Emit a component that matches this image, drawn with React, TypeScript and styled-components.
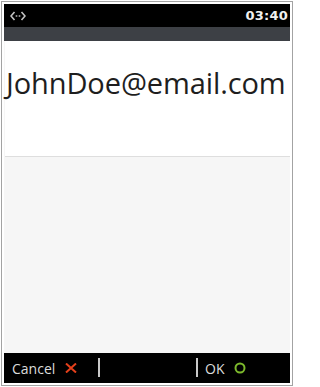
import React from 'react';
import styled, {createGlobalStyle} from 'styled-components';

const GlobalStyle = createGlobalStyle`
    html, body {
        margin: 0;
        padding: 0;
        background: #ffffff;
    }
`

const Page = styled.div`
    width: 294px;
    height: 387px;
    box-sizing: border-box;
    padding: 1px;
    background: #ffffff;
`

const Frame = styled.div`
    width: 100%;
    height: 100%;
    box-sizing: border-box;
    border: 1px solid #a3a3a3;
    padding: 2px;
`

const Screen = styled.div`
    height: 100%;
    display: flex;
    flex-direction: column;
    background: #f6f6f6;
    font-family: "Open Sans", "Noto Sans", sans-serif;
`

const StatusBar = styled.div`
    height: 23px;
    background: #000000;
    display: flex;
    align-items: center;
    justify-content: space-between;
    padding: 0 2px 0 6px;
`

const Clock = styled.span`
    font-family: "DejaVu Sans", sans-serif;
    font-weight: bold;
    font-size: 13px;
    color: #f0f0f0;
    letter-spacing: 0.2px;
`

const TitleBar = styled.div`
    height: 14px;
    background: #3d4045;
`

const Field = styled.div`
    height: 116px;
    background: #ffffff;
    display: flex;
    align-items: flex-start;
    padding-top: 22px;
    box-sizing: border-box;
    border-bottom: 1px solid #dedede;
    margin: 0 0 0 1px;
`

const Value = styled.div`
    font-size: 29px;
    color: #1e1e1e;
    padding-left: 1px;
    white-space: nowrap;
    letter-spacing: -0.1px;
`

const Body = styled.div`
    flex: 1;
`

const Footer = styled.div`
    height: 30px;
    background: #000000;
    display: grid;
    grid-template-columns: 96px 1fr 95px;
    align-items: center;
`

const SoftKey = styled.div<{side: 'left' | 'right'}>`
    position: relative;
    height: 100%;
    display: flex;
    align-items: center;
    gap: 10px;
    padding-left: ${props => props.side === 'left' ? '8px' : '10px'};
    font-size: 14px;
    color: #dcdcdc;
    &::after {
        content: '';
        position: absolute;
        top: 5px;
        ${props => props.side === 'left' ? 'right: 0;' : 'left: 1px;'}
        width: 2px;
        height: 19px;
        background: #c8c8c8;
    }
`

const DataIcon = () => (
    <svg width="16" height="10" viewBox="0 0 16 10">
        <path d="M4.5 1 L1 5 L4.5 9" fill="none" stroke="#c4c4c4" strokeWidth="1.6" />
        <path d="M11.5 1 L15 5 L11.5 9" fill="none" stroke="#c4c4c4" strokeWidth="1.6" />
        <circle cx="6.5" cy="5" r="1" fill="#9a9a9a" />
        <circle cx="9.5" cy="5" r="1" fill="#9a9a9a" />
    </svg>
)

const CrossIcon = () => (
    <svg width="12" height="10" viewBox="0 0 12 10">
        <path d="M1 0.5 L11 9.5 M11 0.5 L1 9.5" stroke="#e5401b" strokeWidth="2" />
    </svg>
)

const CircleIcon = () => (
    <svg width="12" height="12" viewBox="0 0 12 12">
        <circle cx="6" cy="6" r="4.5" fill="none" stroke="#7cb82c" strokeWidth="2" />
    </svg>
)

const App = () => {
    return (
        <>
            <GlobalStyle />
            <Page>
                <Frame>
                    <Screen>
                        <StatusBar>
                            <DataIcon />
                            <Clock>03:40</Clock>
                        </StatusBar>
                        <TitleBar />
                        <Field>
                            <Value>JohnDoe@email.com</Value>
                        </Field>
                        <Body />
                        <Footer>
                            <SoftKey side="left">
                                Cancel
                                <CrossIcon />
                            </SoftKey>
                            <div />
                            <SoftKey side="right">
                                OK
                                <CircleIcon />
                            </SoftKey>
                        </Footer>
                    </Screen>
                </Frame>
            </Page>
        </>
    );
};

export default App;
